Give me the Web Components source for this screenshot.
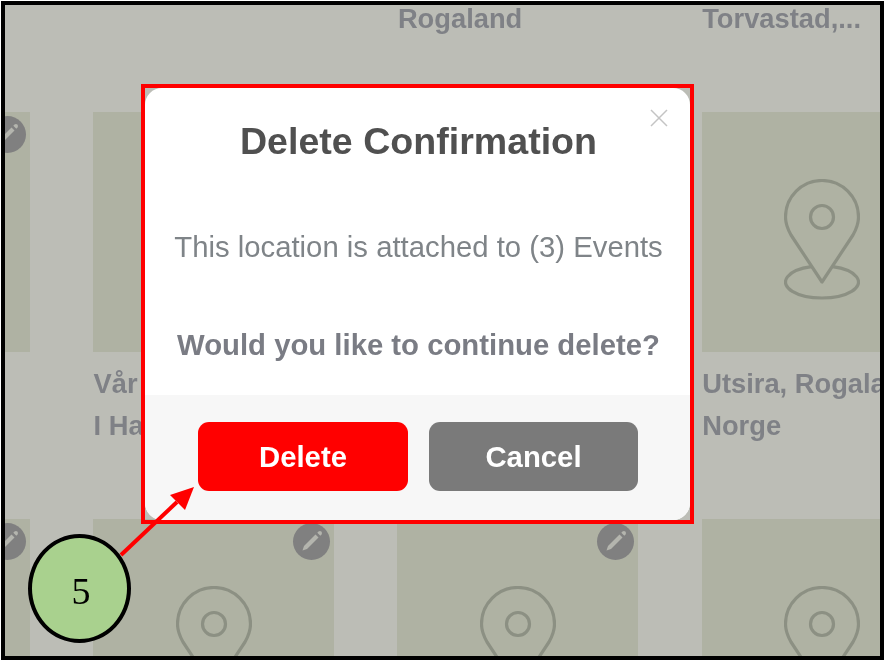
<!DOCTYPE html>
<html>
<head>
<meta charset="utf-8">
<title>Delete Confirmation</title>
<style>
    html, body { margin: 0; padding: 0; background: #fff; }
    body { padding: 1px 0 0 1px; font-family: "Liberation Sans", Arial, sans-serif; }
</style>
</head>
<body>
<shot-frame>
    <location-grid>
        <location-card hide-edit></location-card>
        <location-card hide-edit></location-card>
        <location-card hide-edit><span></span><span>Rogaland</span></location-card>
        <location-card hide-edit><span></span><span>Torvastad,...</span></location-card>

        <location-card></location-card>
        <location-card><span>Vår Frelsers Kirke,</span><span>I Haugesund</span></location-card>
        <location-card></location-card>
        <location-card hide-edit><span>Utsira, Rogaland,</span><span>Norge</span></location-card>

        <location-card></location-card>
        <location-card></location-card>
        <location-card></location-card>
        <location-card hide-edit></location-card>
    </location-grid>

    <delete-dialog>
        <span slot="title">Delete Confirmation</span>
        <span slot="message">This location is attached to (3) Events</span>
        <span slot="question">Would you like to continue delete?</span>
        <dialog-button slot="actions" kind="danger">Delete</dialog-button>
        <dialog-button slot="actions">Cancel</dialog-button>
    </delete-dialog>

    <step-callout>5</step-callout>
</shot-frame>

<script>
class ShotFrame extends HTMLElement {
    constructor() {
        super();
        this.attachShadow({ mode: "open" });
        this.shadowRoot.innerHTML = `
            <style>
                :host {
                    display: block;
                    position: relative;
                    box-sizing: border-box;
                    width: 883px;
                    height: 659px;
                    border: 4px solid #000;
                    background: #bcbdb6;
                    overflow: hidden;
                    filter: blur(0.45px);
                }
            </style>
            <slot></slot>
        `;
    }
}

class LocationGrid extends HTMLElement {
    constructor() {
        super();
        this.attachShadow({ mode: "open" });
        this.shadowRoot.innerHTML = `
            <style>
                :host {
                    display: grid;
                    grid-template-columns: repeat(4, 241px);
                    grid-auto-rows: 407px;
                    column-gap: 63.300px;
                    margin: -300px 0 0 -216.200px;
                    width: 1200px;
                }
            </style>
            <slot></slot>
        `;
    }
}

class LocationCard extends HTMLElement {
    constructor() {
        super();
        this.attachShadow({ mode: "open" });
        this.shadowRoot.innerHTML = `
            <style>
                :host {
                    display: block;
                    font: bold 27.300px/42px "Liberation Sans", Arial, sans-serif;
                    color: #7f8186;
                    white-space: nowrap;
                }
                .tile {
                    position: relative;
                    box-sizing: border-box;
                    height: 240px;
                    padding-top: 16px;
                    background: #afb2a3;
                    display: flex;
                    align-items: center;
                    justify-content: center;
                    margin-bottom: 11px;
                }
                .edit {
                    position: absolute;
                    top: 4px;
                    right: 4px;
                    width: 37px;
                    height: 37px;
                    border-radius: 50%;
                    background: #808080;
                }
                :host([hide-edit]) .edit { display: none; }
                ::slotted(span) { display: block; height: 42px; padding-left: 0.500px; }
            </style>
            <div class="tile">
                <svg width="76" height="122" viewBox="1 0 76 122" fill="none" stroke="#8c9083" stroke-width="3.200">
                    <path d="M39 103 L8 56 C4 49 2.500 44 2.500 38 A36.500 36.500 0 0 1 75.500 38 C75.500 44 74 49 70 56 Z" stroke-linejoin="round"/>
                    <circle cx="39" cy="38" r="11.500"/>
                    <path d="M28.400 87.700 A36.500 16 0 1 0 49.600 87.700"/>
                </svg>
                <svg class="edit" viewBox="0 0 37 37">
                    <path d="M9.500 27.500 L11 23 L22.500 11.500 L25.500 14.500 L14 26 Z" fill="#b4b5ae"/>
                    <path d="M24.300 9.700 L25.500 8.500 Q27 7.500 28.300 8.500 L28.500 8.700 Q29.500 10 28.500 11.500 L27.300 12.700 Z" fill="#b4b5ae"/>
                </svg>
            </div>
            <slot></slot>
        `;
    }
}

class DialogButton extends HTMLElement {
    constructor() {
        super();
        this.attachShadow({ mode: "open" });
        this.shadowRoot.innerHTML = `
            <style>
                :host {
                    display: flex;
                    align-items: center;
                    justify-content: center;
                    width: 209px;
                    height: 69px;
                    border-radius: 11px;
                    background: #7a7a7a;
                    color: #fff;
                    font: bold 29.300px "Liberation Sans", Arial, sans-serif;
                }
                :host([kind="danger"]) { background: #f00; width: 210px; }
            </style>
            <slot></slot>
        `;
    }
}

class DeleteDialog extends HTMLElement {
    constructor() {
        super();
        this.attachShadow({ mode: "open" });
        this.shadowRoot.innerHTML = `
            <style>
                :host {
                    position: absolute;
                    left: 136px;
                    top: 79px;
                    box-sizing: border-box;
                    width: 553px;
                    height: 440px;
                    border: 4px solid #f00;
                    font-family: "Liberation Sans", Arial, sans-serif;
                    text-align: center;
                }
                .modal {
                    height: 100%;
                    display: flex;
                    flex-direction: column;
                    background: #fff;
                    border-radius: 17px;
                    overflow: hidden;
                    position: relative;
                }
                .title, .message, .question { padding-left: 2px; }
                .title {
                    height: 106px;
                    line-height: 106px;
                    font-size: 37.600px;
                    font-weight: bold;
                    color: #505050;
                }
                .close {
                    position: absolute;
                    top: 21px;
                    right: 22px;
                }
                .message {
                    height: 107px;
                    line-height: 105px;
                    font-size: 29.300px;
                    color: #7f8488;
                }
                .question {
                    height: 94px;
                    line-height: 88px;
                    font-size: 29.300px;
                    font-weight: bold;
                    color: #7a7c84;
                }
                .actions {
                    flex: 1;
                    display: flex;
                    gap: 21px;
                    padding: 27px 0 0 53px;
                    background: #f7f7f7;
                }
            </style>
            <div class="modal">
                <div class="title"><slot name="title"></slot></div>
                <svg class="close" width="18" height="18" viewBox="0 0 18 18" stroke="#c4c4c4" stroke-width="1.500">
                    <path d="M1 1 L17 17 M17 1 L1 17"/>
                </svg>
                <div class="message"><slot name="message"></slot></div>
                <div class="question"><slot name="question"></slot></div>
                <div class="actions"><slot name="actions"></slot></div>
            </div>
        `;
    }
}

class StepCallout extends HTMLElement {
    constructor() {
        super();
        this.attachShadow({ mode: "open" });
        this.shadowRoot.innerHTML = `
            <style>
                :host {
                    position: absolute;
                    left: 23px;
                    top: 529px;
                    box-sizing: border-box;
                    width: 103px;
                    height: 109px;
                    padding: 5px 0 0 3px;
                    border: 4px solid #000;
                    border-radius: 50%;
                    background: #a9d18e;
                    display: flex;
                    align-items: center;
                    justify-content: center;
                    color: #000;
                    font: 38px "Liberation Serif", "Times New Roman", serif;
                }
                svg {
                    position: absolute;
                    left: -4px;
                    top: -4px;
                    overflow: visible;
                }
            </style>
            <slot></slot>
            <svg width="103" height="109" viewBox="28 534 103 109">
                <line x1="121" y1="555" x2="177" y2="502" stroke="#f00" stroke-width="4"/>
                <polygon points="194,487 170,495 185,510" fill="#f00"/>
            </svg>
        `;
    }
}

customElements.define("shot-frame", ShotFrame);
customElements.define("location-grid", LocationGrid);
customElements.define("location-card", LocationCard);
customElements.define("dialog-button", DialogButton);
customElements.define("delete-dialog", DeleteDialog);
customElements.define("step-callout", StepCallout);
</script>
</body>
</html>
